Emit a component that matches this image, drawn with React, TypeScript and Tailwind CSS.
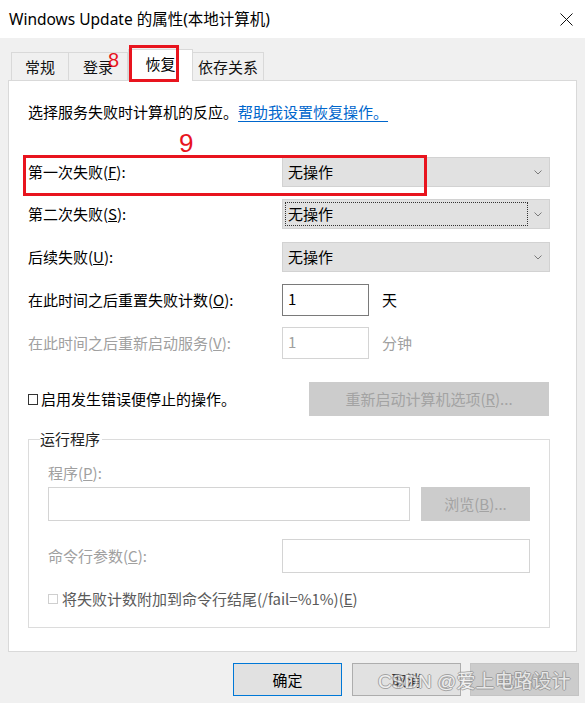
import React from "react";

const Chevron = () => (
  <svg width="8" height="5" viewBox="0 0 8 5" className="shrink-0">
    <polyline points="0.5,0.5 4,4 7.5,0.5" fill="none" stroke="#7a7a7a" strokeWidth="1" />
  </svg>
);

function Dropdown({ focus }: { focus?: boolean }) {
  return (
    <div className="w-[268px] h-[30px] bg-[#e1e1e1] border border-[#d2d2d2] flex items-center pl-[2px] pr-[7px]">
      <div
        className={
          "flex-1 h-[24px] flex items-center pl-[2px] " +
          (focus ? "border border-dotted border-[#333]" : "border border-transparent")
        }
      >
        无操作
      </div>
      <div className="w-[14px] flex justify-end">
        <Chevron />
      </div>
    </div>
  );
}

export default function App() {
  return (
    <div className="relative w-[585px] h-[703px] overflow-hidden bg-[#f0f0f0] text-black text-[15px] leading-[20px] font-['Noto_Sans_CJK_SC','Microsoft_YaHei',sans-serif]">
      {/* title bar */}
      <div className="h-[38px] bg-white flex items-center justify-between pl-[9px] pr-[12px]">
        <span className="text-[15.5px] font-['Noto_Sans','Noto_Sans_CJK_SC',sans-serif]">
          Windows Update 的属性(本地计算机)
        </span>
        <svg width="13" height="13" viewBox="0 0 13 13">
          <line x1="0.5" y1="0.5" x2="12.5" y2="12.5" stroke="#111" strokeWidth="1" />
          <line x1="12.5" y1="0.5" x2="0.5" y2="12.5" stroke="#111" strokeWidth="1" />
        </svg>
      </div>

      {/* tabs */}
      <div className="h-[42px] flex items-end pl-[11px]">
        <div className="w-[58px] h-[28px] border border-b-0 border-[#d9d9d9] flex items-center justify-center text-[#111]">
          常规
        </div>
        <div className="w-[59px] h-[28px] border border-b-0 border-l-0 border-[#d9d9d9] flex items-center justify-center text-[#111]">
          登录
        </div>
        <div className="relative z-10 w-[65px] h-[32px] mb-[-1px] bg-white border border-b-0 border-[#d9d9d9] flex items-center justify-center pb-[3px]">
          恢复
        </div>
        <div className="w-[71px] h-[28px] border border-b-0 border-l-0 border-[#d9d9d9] flex items-center justify-center text-[#111]">
          依存关系
        </div>
      </div>

      {/* panel */}
      <div className="mx-[8px] h-[572px] bg-white border border-[#d9d9d9] px-[19px]">
        <div className="mt-[21px] flex">
          <span>选择服务失败时计算机的反应。</span>
          <span className="text-[#0066cc] underline underline-offset-[3px]">帮助我设置恢复操作。</span>
        </div>

        <div className="mt-[35px] h-[30px] flex items-center">
          <div className="w-[254px]">
            第一次失败(<u>F</u>):
          </div>
          <Dropdown />
        </div>
        <div className="mt-[12px] h-[30px] flex items-center">
          <div className="w-[254px]">
            第二次失败(<u>S</u>):
          </div>
          <Dropdown focus />
        </div>
        <div className="mt-[13px] h-[30px] flex items-center">
          <div className="w-[254px]">
            后续失败(<u>U</u>):
          </div>
          <Dropdown />
        </div>

        <div className="mt-[12px] h-[32px] flex items-center">
          <div className="w-[254px]">
            在此时间之后重置失败计数(<u>O</u>):
          </div>
          <div className="w-[87px] h-[32px] border border-[#7a7a7a] pl-[5px] pt-[4px]">1</div>
          <div className="ml-[13px]">天</div>
        </div>
        <div className="mt-[11px] h-[32px] flex items-center text-[#a0a0a0]">
          <div className="w-[254px]">
            在此时间之后重新启动服务(<u>V</u>):
          </div>
          <div className="w-[87px] h-[32px] border border-[#d4d4d4] pl-[5px] pt-[4px]">1</div>
          <div className="ml-[13px]">分钟</div>
        </div>

        <div className="mt-[23px] h-[34px] flex items-center">
          <div className="w-[10px] h-[11px] border border-[#333] mr-[3px]" />
          <div className="w-[268px]">启用发生错误便停止的操作。</div>
          <div className="w-[240px] h-[34px] bg-[#cccccc] flex items-center justify-center text-[#a3a3a3]">
            重新启动计算机选项(<u>R</u>)...
          </div>
        </div>

        {/* group box */}
        <div className="relative mt-[23px] h-[189px] w-[522px] border border-[#dcdcdc] pl-[19px]">
          <div className="absolute left-[11px] top-[-11px] bg-white pr-[2px] text-[#222]">运行程序</div>
          <div className="mt-[23px] text-[#a0a0a0]">
            程序(<u>P</u>):
          </div>
          <div className="mt-[4px] flex">
            <div className="w-[362px] h-[34px] border border-[#d4d4d4]" />
            <div className="ml-[11px] w-[109px] h-[34px] bg-[#cccccc] flex items-center justify-center text-[#a3a3a3]">
              浏览(<u>B</u>)...
            </div>
          </div>
          <div className="mt-[18px] h-[34px] flex items-center text-[#a0a0a0]">
            <div className="w-[234px]">
              命令行参数(<u>C</u>):
            </div>
            <div className="w-[248px] h-[34px] border border-[#d4d4d4]" />
          </div>
          <div className="mt-[16px] flex items-center text-[#5a5a5a]">
            <div className="w-[10px] h-[10px] border border-[#cfcfcf] mr-[4px]" />
            <span>
              将失败计数附加到命令行结尾(/fail=%1%)(<u>E</u>)
            </span>
          </div>
        </div>
      </div>

      {/* bottom buttons */}
      <div className="mt-[11px] flex justify-end pr-[6px]">
        <div className="w-[109px] h-[33px] bg-[#e1e1e1] border border-[#0078d7] flex items-center justify-center">
          确定
        </div>
        <div className="ml-[10px] w-[109px] h-[33px] bg-[#e1e1e1] border border-[#adadad] flex items-center justify-center text-[#333]">
          取消
        </div>
        <div className="ml-[9px] w-[109px] h-[33px] bg-[#cccccc] border border-[#c4c4c4] flex items-center justify-center text-[#a3a3a3]">
          应用(<u>A</u>)
        </div>
      </div>

      {/* annotations */}
      <div className="absolute left-[129px] top-[45px] w-[50px] h-[37px] border-[3px] border-[#e8141e] z-20" />
      <div className="absolute left-[108px] top-[50px] text-[20px] leading-[20px] text-[#e8141e] font-['Liberation_Sans',sans-serif]">
        8
      </div>
      <div className="absolute left-[179px] top-[130px] text-[26px] leading-[26px] text-[#e8141e] font-['Liberation_Sans',sans-serif]">
        9
      </div>
      <div className="absolute left-[23px] top-[155px] w-[404px] h-[41px] border-[3px] border-[#e8141e]" />

      {/* watermark */}
      <div className="absolute left-[378px] top-[670px] opacity-70 text-[19px] leading-[24px] text-[#f4f4f4] [text-shadow:1px_0_#8a8a8a,-1px_0_#8a8a8a,0_1px_#8a8a8a,0_-1px_#8a8a8a] font-['Liberation_Sans','Noto_Sans_CJK_SC',sans-serif] whitespace-nowrap">
        CSDN @爱上电路设计
      </div>
    </div>
  );
}
